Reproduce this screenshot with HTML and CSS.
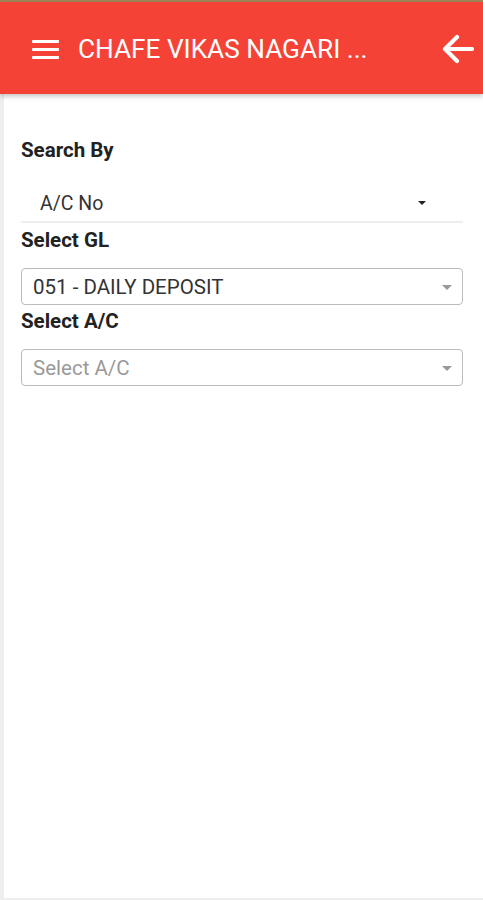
FILE: index.html
```html
<!DOCTYPE html>
<html>

<head>
    <meta charset="UTF-8">
    <title>CHAFE VIKAS NAGARI</title>
    <link rel="stylesheet" href="styles.css">
</head>

<body>
    <div class="topStrip"></div>
    <div class="header">
        <div class="menuBtn">
            <span></span>
            <span></span>
            <span></span>
        </div>
        <div class="title">CHAFE VIKAS NAGARI ...</div>
        <svg class="backBtn" width="32" height="30" viewBox="0 0 32 30">
            <path d="M30 15 H4 M15 3 L3 15 L15 27" fill="none" stroke="#fff" stroke-width="4.2" stroke-linecap="round" stroke-linejoin="round"/>
        </svg>
    </div>
    <div class="page">
        <div class="label first">Search By</div>
        <div class="plainSelect">
            <span>A/C No</span>
            <span class="caret dark"></span>
        </div>
        <div class="label">Select GL</div>
        <div class="boxSelect">
            <span>051 - DAILY DEPOSIT</span>
            <span class="caret"></span>
        </div>
        <div class="label">Select A/C</div>
        <div class="boxSelect">
            <span class="placeholder">Select A/C</span>
            <span class="caret"></span>
        </div>
    </div>
</body>

</html>
```

FILE: styles.css
```css
html,
body {
    margin: 0;
    padding: 0;
    height: 900px;
    overflow: hidden;
}

body {
    background-color: #EEEEEE;
    font-family: Roboto, "Liberation Sans", sans-serif;
    color: #222;
}

.topStrip {
    height: 2px;
    background-color: #A08758;
}

.header {
    height: 92px;
    background-color: #F44336;
    display: flex;
    align-items: center;
    padding: 0 9px 0 32px;
    box-shadow: 0 2px 5px rgba(0, 0, 0, 0.25);
    position: relative;
    z-index: 1;
}

.menuBtn {
    width: 27px;
    display: flex;
    flex-direction: column;
    gap: 5px;
    margin-top: 2px;
}

.menuBtn span {
    display: block;
    height: 3px;
    background-color: #FFF;
    border-radius: 1px;
}

.title {
    flex: 1;
    margin-left: 19px;
    color: #FFF;
    font-size: 26.2px;
    margin-top: 2px;
    white-space: nowrap;
}

.backBtn {
    display: block;
    margin-top: 2px;
}

.page {
    margin-left: 4px;
    height: 804px;
    background-color: #FFF;
    padding: 0 20px 0 17px;
}

.label {
    font-size: 20.5px;
    font-weight: bold;
    color: #222;
    line-height: 22px;
}

.label.first {
    padding-top: 45px;
}

.plainSelect {
    margin-top: 24px;
    height: 36px;
    border-bottom: 2px solid #EEE;
    display: flex;
    align-items: center;
    justify-content: space-between;
    padding: 0 37px 0 19px;
    font-size: 19.5px;
    color: #333;
    margin-bottom: 6px;
}

.boxSelect {
    margin-top: 17px;
    height: 34px;
    border: 1px solid #BBB;
    border-radius: 4px;
    display: flex;
    align-items: center;
    justify-content: space-between;
    padding: 1px 10px 0 11px;
    font-size: 20.5px;
    color: #333;
    margin-bottom: 5px;
}

.placeholder {
    color: #999;
}

.caret {
    width: 0;
    height: 0;
    border-left: 5px solid transparent;
    border-right: 5px solid transparent;
    border-top: 5px solid #999;
}

.caret.dark {
    border-left-width: 4px;
    border-right-width: 4px;
    border-top: 4px solid #222;
}
```
